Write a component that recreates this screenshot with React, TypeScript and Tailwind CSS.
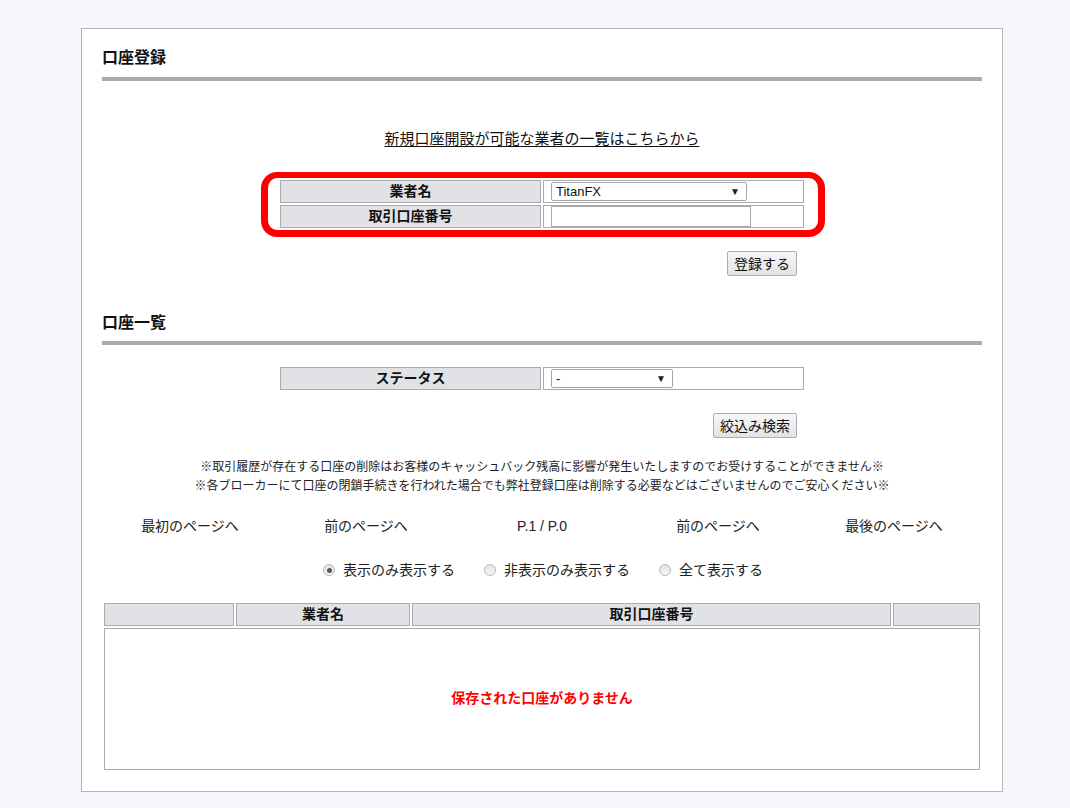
import { ReactNode } from "react";

const Label = ({ children }: { children: ReactNode }) => (
    <div className="h-[23px] flex items-center justify-center border border-[#ababae] bg-[#e1e2e6] pb-[2px] text-[14px] font-bold leading-none text-[#111]">
        {children}
    </div>
);

const ValueCell = ({ children }: { children?: ReactNode }) => (
    <div className="h-[23px] flex items-center border border-[#ababae] bg-white pl-[7px]">
        {children}
    </div>
);

const FakeSelect = ({ value, width }: { value: string; width: string }) => (
    <div
        className={`${width} h-[19px] flex items-center justify-between rounded-[2px] border border-[#a6a6a6] bg-white pl-[4px] pr-[6px] font-['Liberation_Sans',sans-serif] text-[13px] leading-none text-[#111]`}
    >
        <span>{value}</span>
        <span className="text-[10px] text-[#222]">▼</span>
    </div>
);

const Button = ({ children, width }: { children: ReactNode; width: string }) => (
    <button
        className={`${width} h-[25px] rounded-[2px] border border-[#adadad] bg-gradient-to-b from-[#f7f7f7] to-[#e3e3e3] text-[14px] leading-none text-[#111]`}
    >
        {children}
    </button>
);

const Heading = ({ title }: { title: string }) => (
    <>
        <h2 className="h-[24px] text-[16px] font-bold leading-[24px] text-[#111]">{title}</h2>
        <div className="mt-[6px] h-[4px] w-full bg-[#a9abb1]"></div>
    </>
);

const Radio = ({ label, checked }: { label: string; checked?: boolean }) => (
    <label className="flex items-center gap-[8px]">
        <span className="flex h-[12px] w-[12px] items-center justify-center rounded-full border border-[#b9b9b9] bg-gradient-to-b from-[#e4e4e4] to-[#f5f5f5]">
            {checked && <span className="h-[5px] w-[5px] rounded-full bg-[#555]"></span>}
        </span>
        <span>{label}</span>
    </label>
);

const App = () => {
    return (
        <div className="min-h-[808px] bg-[#f6f7fc] pt-[28px] font-['Liberation_Sans','Noto_Sans_CJK_JP',sans-serif] text-[#111]">
            <div className="ml-[81px] w-[922px] border border-[#b4b4b8] bg-white px-[20px] pt-[17px] pb-[21px]">
                {/* 口座登録 */}
                <h2 className="h-[24px] text-[16px] font-bold leading-[24px]">口座登録</h2>
                <div className="mt-[7px] h-[4px] w-full bg-[#a9abb1]"></div>

                <div className="mt-[48px] h-[20px] text-center text-[15px] leading-[20px]">
                    <a href="#" className="underline underline-offset-2">新規口座開設が可能な業者の一覧はこちらから</a>
                </div>

                <div className="relative mx-auto mt-[31px] w-[524px]">
                    <div className="grid grid-cols-2 gap-[2px]">
                        <Label>業者名</Label>
                        <ValueCell>
                            <FakeSelect value="TitanFX" width="w-[196px]" />
                        </ValueCell>
                        <Label>取引口座番号</Label>
                        <ValueCell>
                            <div className="h-[21px] w-[200px] border border-[#a9a9a9] bg-white"></div>
                        </ValueCell>
                    </div>
                    <div className="pointer-events-none absolute -left-[19px] -top-[8px] -right-[21px] -bottom-[9px] rounded-[16px] border-[7px] border-t-[6px] border-[#ff0000]"></div>
                </div>

                <div className="mx-auto mt-[23px] flex w-[524px] justify-end pr-[7px]">
                    <Button width="w-[70px]">登録する</Button>
                </div>

                {/* 口座一覧 */}
                <div className="mt-[35px]">
                    <Heading title="口座一覧" />
                </div>

                <div className="mx-auto mt-[22px] grid w-[524px] grid-cols-2 gap-[2px]">
                    <Label>ステータス</Label>
                    <ValueCell>
                        <FakeSelect value="-" width="w-[122px]" />
                    </ValueCell>
                </div>

                <div className="mx-auto mt-[23px] flex w-[524px] justify-end pr-[7px]">
                    <Button width="w-[84px]">絞込み検索</Button>
                </div>

                <div className="mt-[20px] text-center text-[12px] leading-[19px] text-[#222]">
                    <p>※取引履歴が存在する口座の削除はお客様のキャッシュバック残高に影響が発生いたしますのでお受けすることができません※</p>
                    <p>※各ブローカーにて口座の閉鎖手続きを行われた場合でも弊社登録口座は削除する必要などはございませんのでご安心ください※</p>
                </div>

                <div className="mt-[20px] grid h-[20px] grid-cols-5 text-center text-[14px] leading-[20px] text-[#222]">
                    <span>最初のページへ</span>
                    <span>前のページへ</span>
                    <span>P.1 / P.0</span>
                    <span>前のページへ</span>
                    <span>最後のページへ</span>
                </div>

                <div className="mt-[24px] flex h-[20px] items-center justify-center gap-[29px] pl-[2px] text-[14px] leading-[20px] text-[#222]">
                    <Radio label="表示のみ表示する" checked />
                    <Radio label="非表示のみ表示する" />
                    <Radio label="全て表示する" />
                </div>

                <div className="mt-[23px] px-[2px]">
                    <div className="grid grid-cols-[130px_174px_1fr_87px] gap-[2px]">
                        <Label>{""}</Label>
                        <Label>業者名</Label>
                        <Label>取引口座番号</Label>
                        <Label>{""}</Label>
                    </div>
                    <div className="mt-[2px] flex h-[142px] items-center justify-center border border-[#ababae] bg-white pb-[2px] text-[14px] font-bold text-[#ff0000]">
                        保存された口座がありません
                    </div>
                </div>
            </div>
        </div>
    );
};

export default App;
